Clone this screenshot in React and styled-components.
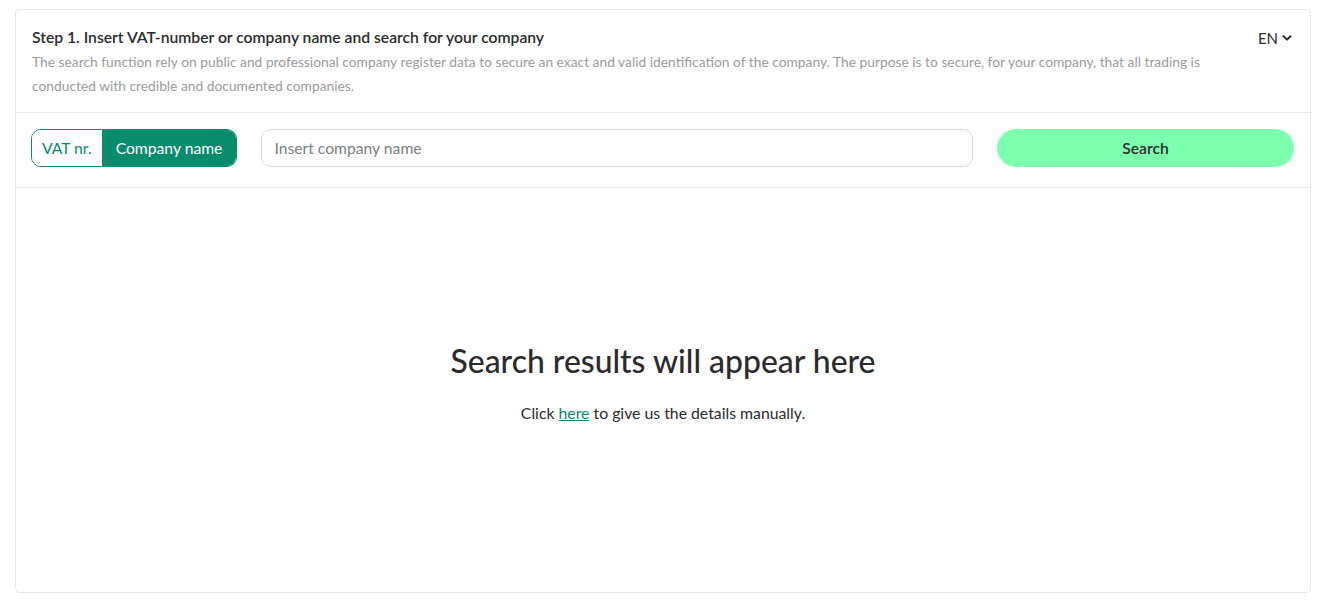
import React, { useState } from 'react';
import styled, { createGlobalStyle } from 'styled-components';

const GlobalStyle = createGlobalStyle`
  html, body {
    margin: 0;
    padding: 0;
    background: #ffffff;
  }
  body {
    font-family: Lato, 'Noto Sans', sans-serif;
    color: #2b2b2b;
  }
  * {
    box-sizing: border-box;
  }
`;

const Page = styled.div`
  padding: 9px 28px 16px 15px;
`;

const Card = styled.section`
  border: 1px solid #e6e6e6;
  border-radius: 5px;
  height: 584px;
  display: flex;
  flex-direction: column;
`;

const Header = styled.header`
  display: flex;
  justify-content: space-between;
  align-items: flex-start;
  gap: 30px;
  padding: 17px 18px 14px 16px;
  border-bottom: 1px solid #ebebeb;
`;

const Intro = styled.div`
  flex: 1;
`;

const Title = styled.h2`
  margin: 0 0 3px;
  font-size: 15.7px;
  font-weight: 600;
  line-height: 20px;
  color: #2b2b2b;
`;

const Description = styled.p`
  margin: 0;
  font-size: 13.8px;
  line-height: 24px;
  color: #9c9c9c;
`;

const LangButton = styled.button`
  display: flex;
  align-items: center;
  gap: 4px;
  border: none;
  background: none;
  padding: 0;
  margin-top: 1px;
  font-family: inherit;
  font-size: 15px;
  line-height: 20px;
  color: #2b2b2b;
  cursor: pointer;
`;

const Controls = styled.div`
  display: flex;
  align-items: center;
  gap: 24px;
  padding: 16px 16px 20px 15px;
  border-bottom: 1px solid #ebebeb;
`;

const Toggle = styled.div`
  display: flex;
  height: 38px;
  border: 1px solid #078c6c;
  border-radius: 10px;
  overflow: hidden;
  flex-shrink: 0;
`;

const ToggleOption = styled.button`
  border: none;
  padding: 0 ${(p) => (p.$active ? '14px' : '10px')};
  font-family: inherit;
  font-size: 15.7px;
  background: ${(p) => (p.$active ? '#078c6c' : '#ffffff')};
  color: ${(p) => (p.$active ? '#ffffff' : '#078c6c')};
  cursor: pointer;
`;

const SearchInput = styled.input`
  flex: 1;
  height: 38px;
  border: 1px solid #d3d6dc;
  border-radius: 10px;
  padding: 0 12px;
  font-family: inherit;
  font-size: 15.7px;
  color: #2b2b2b;
  outline: none;
  &::placeholder {
    color: #7b7f86;
  }
`;

const SearchButton = styled.button`
  width: 297px;
  height: 38px;
  flex-shrink: 0;
  border: none;
  border-radius: 19px;
  background: #7dffb0;
  font-family: inherit;
  font-size: 15.7px;
  font-weight: 600;
  color: #2b2b2b;
  cursor: pointer;
`;

const Empty = styled.div`
  flex: 1;
  display: flex;
  flex-direction: column;
  align-items: center;
  justify-content: center;
  padding-bottom: 14px;
`;

const EmptyTitle = styled.h1`
  margin: 0 0 24px;
  font-size: 31.9px;
  font-weight: 500;
  line-height: 36px;
  color: #2b2b2b;
`;

const EmptyText = styled.p`
  margin: 0;
  font-size: 15.8px;
  line-height: 20px;
  color: #2b2b2b;
`;

const Link = styled.a`
  color: #078c6c;
  text-decoration: underline;
`;

const Chevron = () => (
  <svg width="10" height="10" viewBox="0 0 10 10" aria-hidden="true">
    <path d="M1.5 3.2 L5 6.6 L8.5 3.2" fill="none" stroke="#2b2b2b" strokeWidth="2" strokeLinecap="round" strokeLinejoin="round" />
  </svg>
);

export default function App() {
  const [mode, setMode] = useState('name');

  return (
    <Page>
      <GlobalStyle />
      <Card>
        <Header>
          <Intro>
            <Title>Step 1. Insert VAT-number or company name and search for your company</Title>
            <Description>
              The search function rely on public and professional company register data to secure an exact and valid
              identification of the company. The purpose is to secure, for your company, that all trading is conducted
              with credible and documented companies.
            </Description>
          </Intro>
          <LangButton>
            EN <Chevron />
          </LangButton>
        </Header>
        <Controls>
          <Toggle>
            <ToggleOption $active={mode === 'vat'} onClick={() => setMode('vat')}>
              VAT nr.
            </ToggleOption>
            <ToggleOption $active={mode === 'name'} onClick={() => setMode('name')}>
              Company name
            </ToggleOption>
          </Toggle>
          <SearchInput placeholder={mode === 'vat' ? 'Insert VAT number' : 'Insert company name'} />
          <SearchButton>Search</SearchButton>
        </Controls>
        <Empty>
          <EmptyTitle>Search results will appear here</EmptyTitle>
          <EmptyText>
            Click <Link href="#">here</Link> to give us the details manually.
          </EmptyText>
        </Empty>
      </Card>
    </Page>
  );
}
